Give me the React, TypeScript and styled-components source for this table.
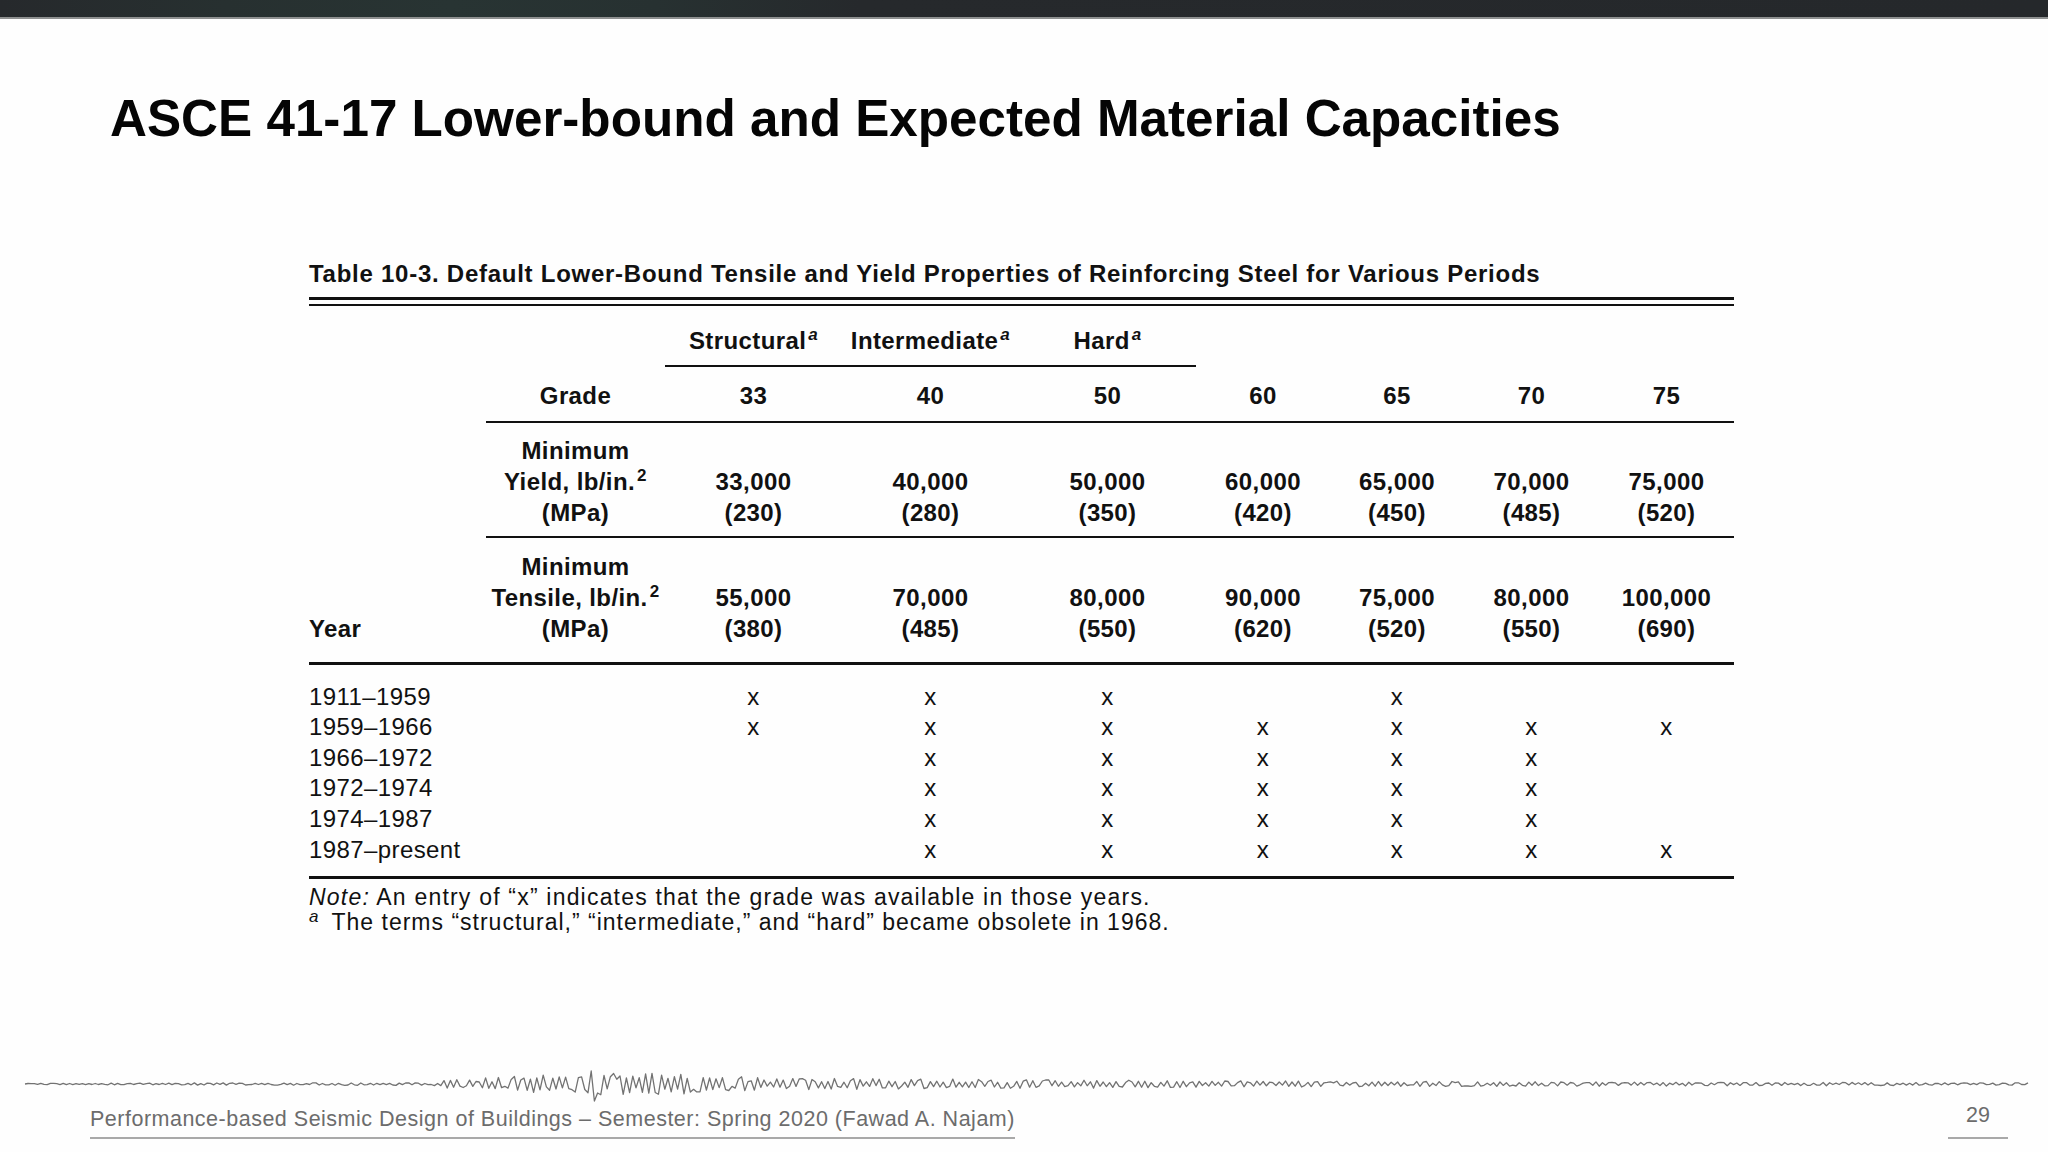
import React from "react";
import styled, { createGlobalStyle } from "styled-components";

const GlobalStyle = createGlobalStyle`
  html, body {
    margin: 0;
    padding: 0;
    background: #fefefe;
  }
  body {
    font-family: "Liberation Sans", Arial, Helvetica, sans-serif;
  }
`;

const Slide = styled.div`
  width: 2048px;
  height: 1152px;
  box-sizing: border-box;
  padding-bottom: 13px;
  display: flex;
  flex-direction: column;
  background: #fefefe;
  overflow: hidden;
`;

const TopBar = styled.div`
  flex: none;
  height: 17px;
  background: linear-gradient(
    90deg,
    #26292c 0%,
    #273030 11%,
    #283433 22%,
    #273131 32%,
    #26292c 42%,
    #25282b 100%
  );
  border-bottom: 2px solid #8e9090;
`;

const Title = styled.h1`
  margin: 71px 0 0 110px;
  font-size: 51.2px;
  line-height: 58.65px;
  font-weight: 700;
  color: #050505;
`;

const TableBlock = styled.section`
  margin: 109px 0 0 309px;
  width: 1425px;
  color: #111;
`;

const Caption = styled.div`
  font-size: 24px;
  font-weight: 700;
  line-height: 31px;
  letter-spacing: 0.74px;
  white-space: nowrap;
`;

const DoubleRule = styled.div`
  margin-top: 8px;
  height: 9px;
  box-sizing: border-box;
  border-top: 3px solid #111;
  border-bottom: 2px solid #111;
`;

const DataTable = styled.table`
  width: 1425px;
  table-layout: fixed;
  border-collapse: separate;
  border-spacing: 0;
  font-size: 24px;
  line-height: 31px;
  letter-spacing: 0.4px;
`;

const Col = styled.col<{ $w: number }>`
  width: ${(p) => p.$w}px;
`;

const Row = styled.tr<{ $pad: string; $bold?: boolean; $lh?: number }>`
  font-weight: ${(p) => (p.$bold ? 700 : 400)};
  line-height: ${(p) => p.$lh ?? 31}px;
  & > td {
    padding: ${(p) => p.$pad};
  }
`;

const Cell = styled.td<{ $rule?: number; $left?: boolean }>`
  text-align: ${(p) => (p.$left ? "left" : "center")};
  vertical-align: bottom;
  white-space: nowrap;
  border-bottom: ${(p) => (p.$rule ? `${p.$rule}px solid #111` : "0")};
`;

const Sup = styled.sup<{ $italic?: boolean }>`
  font-size: 17px;
  line-height: 0;
  vertical-align: 9px;
  font-style: ${(p) => (p.$italic ? "italic" : "normal")};
  font-weight: 700;
  margin-left: 2px;
`;

const Notes = styled.div`
  margin-top: 6px;
  font-size: 23px;
  line-height: 25px;
  white-space: nowrap;
`;

const NoteLine = styled.div<{ $spacing: number }>`
  letter-spacing: ${(p) => p.$spacing}px;
`;

const Em = styled.em`
  font-style: italic;
`;

const FootMark = styled.sup`
  font-size: 17px;
  line-height: 0;
  vertical-align: 8px;
  font-style: italic;
  margin-right: 12px;
`;

const Footer = styled.footer`
  margin-top: auto;
  flex: none;
`;

const Wave = styled.svg`
  display: block;
  width: 2048px;
  height: 38px;
`;

const FooterRow = styled.div`
  display: flex;
  justify-content: space-between;
  align-items: flex-start;
  padding: 0 40px 0 90px;
`;

const FooterText = styled.div`
  padding: 4.6px 0 6px;
  border-bottom: 2px solid #a9a9a9;
  font-size: 21.5px;
  line-height: 24px;
  letter-spacing: 0.5px;
  color: #6c6c6c;
  white-space: nowrap;
`;

const PageNum = styled.div`
  width: 60px;
  padding: 0.3px 0 10px;
  border-bottom: 2px solid #a9a9a9;
  text-align: center;
  font-size: 21.5px;
  line-height: 24px;
  color: #6c6c6c;
`;

const colWidths = [177, 179, 177, 177, 177, 134, 134, 135, 135];

const yieldVals = [
  ["33,000", "(230)"],
  ["40,000", "(280)"],
  ["50,000", "(350)"],
  ["60,000", "(420)"],
  ["65,000", "(450)"],
  ["70,000", "(485)"],
  ["75,000", "(520)"],
];

const tensileVals = [
  ["55,000", "(380)"],
  ["70,000", "(485)"],
  ["80,000", "(550)"],
  ["90,000", "(620)"],
  ["75,000", "(520)"],
  ["80,000", "(550)"],
  ["100,000", "(690)"],
];

const years: [string, boolean[]][] = [
  ["1911–1959", [true, true, true, false, true, false, false]],
  ["1959–1966", [true, true, true, true, true, true, true]],
  ["1966–1972", [false, true, true, true, true, true, false]],
  ["1972–1974", [false, true, true, true, true, true, false]],
  ["1974–1987", [false, true, true, true, true, true, false]],
  ["1987–present", [false, true, true, true, true, true, true]],
];

// seismogram drawn across the footer
const makeWave = () => {
  let s = 20200;
  const rnd = () => {
    s = (s * 1103515245 + 12345) % 2147483648;
    return s / 2147483648;
  };
  const env = (x: number) => {
    if (x < 440) return 0.7 + 0.9 * (x / 440);
    if (x < 560) return 4 + ((x - 440) / 120) * 6;
    if (x < 660) return 11;
    if (x < 780) return 11 - ((x - 660) / 120) * 5;
    if (x < 1350) return 6 - ((x - 780) / 570) * 3.2;
    return 2.8 - ((x - 1350) / 680) * 1.6;
  };
  const mid = 20;
  let d = `M25 ${mid}`;
  let sign = 1;
  for (let x = 28; x <= 2030; x += 3.2) {
    if (rnd() < 0.78) sign = -sign;
    let y = mid + sign * env(x) * (0.3 + 0.7 * rnd());
    if (x > 588 && x < 592) y = 7;
    if (x > 592 && x < 596) y = 37;
    y = Math.max(1, Math.min(37, y));
    d += ` L${x.toFixed(1)} ${y.toFixed(1)}`;
  }
  return d;
};

const wavePath = makeWave();

export default function App() {
  return (
    <>
      <GlobalStyle />
      <Slide>
        <TopBar />
        <Title>ASCE 41-17 Lower-bound and Expected Material Capacities</Title>

        <TableBlock>
          <Caption>
            Table 10-3. Default Lower-Bound Tensile and Yield Properties of
            Reinforcing Steel for Various Periods
          </Caption>
          <DoubleRule />
          <DataTable>
            <colgroup>
              {colWidths.map((w, i) => (
                <Col key={i} $w={w} />
              ))}
            </colgroup>
            <tbody>
              <Row $pad="19px 0 9px" $bold>
                <Cell $left />
                <Cell />
                <Cell $rule={2}>
                  Structural<Sup $italic>a</Sup>
                </Cell>
                <Cell $rule={2}>
                  Intermediate<Sup $italic>a</Sup>
                </Cell>
                <Cell $rule={2}>
                  Hard<Sup $italic>a</Sup>
                </Cell>
                <Cell />
                <Cell />
                <Cell />
                <Cell />
              </Row>
              <Row $pad="13px 0 10px" $bold>
                <Cell $left />
                <Cell $rule={2}>Grade</Cell>
                {["33", "40", "50", "60", "65", "70", "75"].map((g) => (
                  <Cell key={g} $rule={2}>
                    {g}
                  </Cell>
                ))}
              </Row>
              <Row $pad="12px 0 8px" $bold>
                <Cell $left />
                <Cell $rule={2}>
                  Minimum
                  <br />
                  Yield, lb/in.<Sup>2</Sup>
                  <br />
                  (MPa)
                </Cell>
                {yieldVals.map(([a, b], i) => (
                  <Cell key={i} $rule={2}>
                    {a}
                    <br />
                    {b}
                  </Cell>
                ))}
              </Row>
              <Row $pad="13px 0 18px" $bold>
                <Cell $left $rule={3}>
                  Year
                </Cell>
                <Cell $rule={3}>
                  Minimum
                  <br />
                  Tensile, lb/in.<Sup>2</Sup>
                  <br />
                  (MPa)
                </Cell>
                {tensileVals.map(([a, b], i) => (
                  <Cell key={i} $rule={3}>
                    {a}
                    <br />
                    {b}
                  </Cell>
                ))}
              </Row>
              {years.map(([label, marks], r) => {
                const first = r === 0;
                const last = r === years.length - 1;
                const pad = `${first ? 17 : 0}px 0 ${last ? 11 : 0}px`;
                return (
                  <Row key={label} $pad={pad} $lh={30.6}>
                    <Cell $left $rule={last ? 3 : 0}>
                      {label}
                    </Cell>
                    <Cell $rule={last ? 3 : 0} />
                    {marks.map((m, i) => (
                      <Cell key={i} $rule={last ? 3 : 0}>
                        {m ? "x" : ""}
                      </Cell>
                    ))}
                  </Row>
                );
              })}
            </tbody>
          </DataTable>
          <Notes>
            <NoteLine $spacing={1.2}>
              <Em>Note:</Em> An entry of “x” indicates that the grade was
              available in those years.
            </NoteLine>
            <NoteLine $spacing={1.0}>
              <FootMark>a</FootMark>The terms “structural,” “intermediate,”
              and “hard” became obsolete in 1968.
            </NoteLine>
          </Notes>
        </TableBlock>

        <Footer>
          <Wave viewBox="0 0 2048 38">
            <path
              d={wavePath}
              fill="none"
              stroke="#727272"
              strokeWidth="1.3"
              strokeLinejoin="round"
            />
          </Wave>
          <FooterRow>
            <FooterText>
              Performance-based Seismic Design of Buildings – Semester: Spring
              2020 (Fawad A. Najam)
            </FooterText>
            <PageNum>29</PageNum>
          </FooterRow>
        </Footer>
      </Slide>
    </>
  );
}
